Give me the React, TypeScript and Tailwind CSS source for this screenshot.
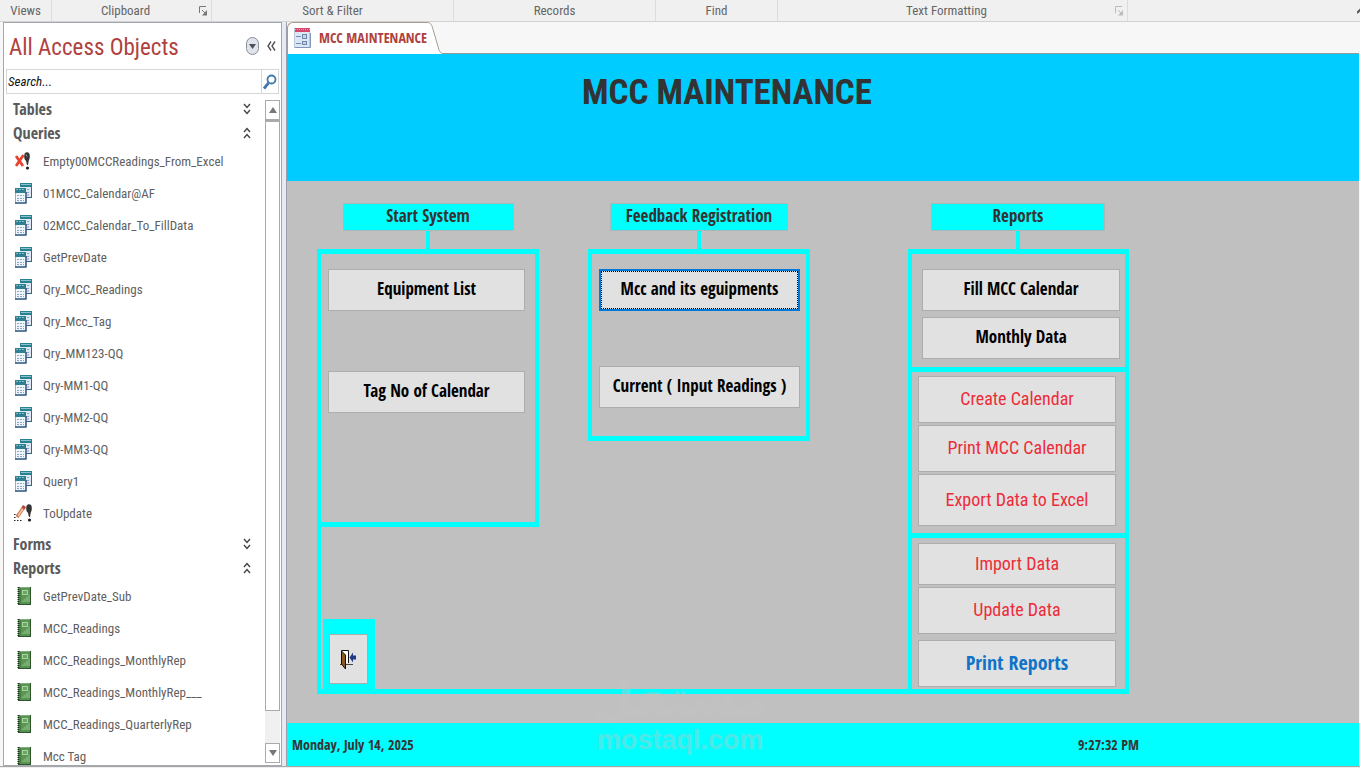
import React from 'react';

const queries = [
  { name: 'Empty00MCCReadings_From_Excel', kind: 'delete' },
  { name: '01MCC_Calendar@AF', kind: 'select' },
  { name: '02MCC_Calendar_To_FillData', kind: 'select' },
  { name: 'GetPrevDate', kind: 'select' },
  { name: 'Qry_MCC_Readings', kind: 'select' },
  { name: 'Qry_Mcc_Tag', kind: 'select' },
  { name: 'Qry_MM123-QQ', kind: 'select' },
  { name: 'Qry-MM1-QQ', kind: 'select' },
  { name: 'Qry-MM2-QQ', kind: 'select' },
  { name: 'Qry-MM3-QQ', kind: 'select' },
  { name: 'Query1', kind: 'select' },
  { name: 'ToUpdate', kind: 'update' },
];

const reports = [
  'GetPrevDate_Sub',
  'MCC_Readings',
  'MCC_Readings_MonthlyRep',
  'MCC_Readings_MonthlyRep___',
  'MCC_Readings_QuarterlyRep',
  'Mcc Tag',
];

const LauncherIcon: React.FC<{ className: string }> = ({ className }) => (
  <svg width="8" height="10" viewBox="0 0 8 10" className={className} fill="none" stroke="currentColor">
    <path d="M.5 7V.5H7" />
    <path d="M3 4l4 4" />
    <path d="M8 4v5.500H3z" fill="currentColor" stroke="none" />
  </svg>
);

const QueryIcon = () => (
  <svg width="17" height="21" viewBox="0 0 17 21">
    <rect x="5" width="12" height="15" fill="#dfe9f3" />
    <rect x="5" width="12" height="4" fill="#2b7f93" />
    <path d="M6 1.500h10" stroke="#8cc3cd" />
    <path d="M5 14.500h12M16.500 4v11" stroke="#3a648f" />
    <path d="M12 6.500h3M12 9.500h3M12 12h3" stroke="#8aa6c4" strokeDasharray="2 1" />
    <rect y="5" width="11" height="15" fill="#eef4fa" />
    <path d="M.5 9v11" stroke="#8fb0cb" />
    <rect y="5" width="11" height="5" fill="#2f8094" />
    <path d="M1 6.500h9" stroke="#7dbac6" strokeDasharray="2 1" />
    <path d="M0 20h11.500M11 9v11" stroke="#2c527f" strokeWidth="1.500" />
    <path d="M2 12.500h7M2 15.500h7M2 17.500h7" stroke="#8ea9c8" strokeDasharray="2 1" />
  </svg>
);

const DeleteQueryIcon = () => (
  <svg width="17" height="19" viewBox="0 0 17 19">
    <path d="M1 4l7 10M8.500 3L1 14" stroke="#e8432f" strokeWidth="2.800" />
    <ellipse cx="12" cy="4.500" rx="2.800" ry="4.200" fill="#333" />
    <path d="M10.500 7h3.500l-1 6h-1z" fill="#333" />
    <path d="M11 2.500l1 2" stroke="#aaa" />
    <circle cx="12.500" cy="16" r="1.600" fill="#222" />
  </svg>
);

const UpdateQueryIcon = () => (
  <svg width="20" height="19" viewBox="0 0 20 19">
    <path d="M3 13L10 3" stroke="#c97050" strokeWidth="3.500" />
    <path d="M4 12L9 4.500" stroke="#f5c9a0" strokeWidth="1.500" />
    <path d="M9 4.500l1.500-2.500" stroke="#b8483a" strokeWidth="3.500" />
    <path d="M0 10.500h1.500M0 13.500h1.500M0 16.500h1.500M3 16.500h1.500M6 16.500h1.500" stroke="#222" />
    <ellipse cx="15" cy="4.500" rx="2.800" ry="4.200" fill="#333" />
    <path d="M13.500 7H17l-1 6h-1z" fill="#333" />
    <circle cx="15.500" cy="16" r="1.600" fill="#222" />
  </svg>
);

const ReportIcon = () => (
  <svg width="14" height="18" viewBox="0 0 14 18">
    <rect x="1" width="13" height="18" fill="#5a9455" />
    <path d="M2 .5h11" stroke="#7fae78" />
    <path d="M4 15l9-8v8z" fill="#76ad6e" />
    <rect x="5.500" y="3.500" width="5" height="4" fill="#6aa562" stroke="#a9d3a1" />
    <path d="M13.500 0v17.500H1" stroke="#2d5229" fill="none" />
    <path d="M1.500 0v18" stroke="#1f2b1f" strokeWidth="2" strokeDasharray="1 1" />
    <path d="M3.500 1v15" stroke="#467f41" />
  </svg>
);

const FormIcon = () => (
  <svg width="17" height="20" viewBox="0 0 17 20">
    <rect x=".5" y=".5" width="15" height="19" fill="#dde6f3" stroke="#b9c6dc" />
    <rect x="1" width="15" height="4" fill="#d4476a" />
    <path d="M1 1.500h15" stroke="#ee9fb0" strokeDasharray="1 1" />
    <path d="M2 8.500h5M2 15.500h5" stroke="#6f8cb6" />
    <rect x="8.500" y="6.500" width="4" height="4" fill="#c7d4e8" stroke="#6f86ae" />
    <rect x="8.500" y="13.500" width="4" height="3" fill="#c7d4e8" stroke="#6f86ae" />
    <path d="M1 19.500h15.500V5" fill="none" stroke="#8095bb" />
  </svg>
);

const ExitIcon = () => (
  <svg width="18" height="21" viewBox="0 0 18 21">
    <path d="M1.500 14V1.500h7V14" fill="#fff" stroke="#111" />
    <path d="M0 15.500h13" stroke="#444" />
    <path d="M1.500 2l4 4v14l-4-5z" fill="#8c5a1e" stroke="#111" />
    <path d="M9.500 8.500l3.500-5v3h3v4h-3v3z" fill="#1f3c86" />
  </svg>
);

const Chevrons: React.FC<{ open: boolean }> = ({ open }) => (
  <svg width="8" height="12" viewBox="0 0 8 12" fill="none" stroke="#444" strokeWidth="1.400">
    {open ? <path d="M1 5l3-3.500L7 5M1 11l3-3.500L7 11" /> : <path d="M1 1l3 3.500L7 1M1 7l3 3.500L7 7" />}
  </svg>
);

const RibbonGroup: React.FC<{ label: string; className: string; children?: React.ReactNode }> = ({ label, className, children }) => (
  <div className={`flex items-center border-r border-[#dcdcdc] ${className}`}>
    <span className="flex-1 text-center">{label}</span>
    {children}
  </div>
);

const GroupHeader: React.FC<{ label: string; open: boolean }> = ({ label, open }) => (
  <button type="button" className="flex h-6 w-full items-center justify-between pl-[9px] pr-[14px] text-left font-['Open_Sans_Condensed','Roboto_Condensed',sans-serif] text-[16px] font-bold text-[#5a5a5a]">
    {label}
    <Chevrons open={open} />
  </button>
);

const NavItem: React.FC<{ label: string; icon: React.ReactNode }> = ({ label, icon }) => (
  <li>
    <a href="#" className="flex h-8 items-center text-[13px] text-[#5f5f5f]">
      <span className="flex w-[39px] justify-center pb-0.5">{icon}</span>
      {label}
    </a>
  </li>
);

const SectionLabel: React.FC<{ label: string; className: string }> = ({ label, className }) => (
  <div className="flex w-[222px] flex-col items-center">
    <h2 className={`h-7 border border-[#a8b8b8] bg-[#00ffff] text-center text-[17px] leading-6 text-[#333] ${className}`}>{label}</h2>
    <div className="h-[18px] w-1 bg-[#00ffff]" />
  </div>
);

const plain = 'h-[42px] border border-[#adadad] text-[17px] text-black';
const red = "border border-[#adadad] font-['Roboto_Condensed',sans-serif] text-[18px] font-normal text-[#ed2c3a]";

const FormButton: React.FC<{ label: string; className?: string }> = ({ label, className = plain }) => (
  <button type="button" className={`w-full bg-[#e1e1e1] pb-0.5 ${className}`}>
    {label}
  </button>
);

const App: React.FC = () => {
  return (
    <div className="flex h-screen flex-col overflow-hidden bg-[#f7f7f7] font-['Roboto_Condensed','Liberation_Sans',sans-serif]">
      {/* Ribbon group captions */}
      <div className="flex h-[22px] shrink-0 border-b border-[#d2d2d2] bg-[#f0f0f0] text-[13px] text-[#666]">
        <RibbonGroup label="Views" className="w-[52px]" />
        <RibbonGroup label="Clipboard" className="w-40 pr-1">
          <LauncherIcon className="text-[#777]" />
        </RibbonGroup>
        <RibbonGroup label="Sort & Filter" className="w-[242px]" />
        <RibbonGroup label="Records" className="w-[202px]" />
        <RibbonGroup label="Find" className="w-[122px]" />
        <RibbonGroup label="Text Formatting" className="w-[350px] pr-1">
          <LauncherIcon className="text-[#bbb]" />
        </RibbonGroup>
        <div className="flex flex-1 items-center justify-end">
          <svg width="3" height="8" viewBox="0 0 3 8" fill="none" stroke="#555" strokeWidth="2">
            <path d="M0 6l4-4" />
          </svg>
        </div>
      </div>

      <div className="flex min-h-0 flex-1">
        {/* Navigation pane */}
        <aside className="ml-[3px] flex w-[279px] shrink-0 flex-col border border-[#a3a8ae] bg-white">
          <div className="flex h-[46px] shrink-0 items-center px-[5px]">
            <h2 className="flex-1 pt-1 text-[23px] text-[#b0413e]">All Access Objects</h2>
            <button type="button" aria-label="Object type" className="mr-2 flex h-[18px] w-[13px] items-center justify-center rounded-full border border-[#8a8f98] bg-[#dfe3ea]">
              <svg width="7" height="5" viewBox="0 0 7 5"><path d="M0 0h7L3.500 5z" fill="#4a4f5a" /></svg>
            </button>
            <button type="button" aria-label="Collapse pane">
              <svg width="9" height="10" viewBox="0 0 9 10" fill="none" stroke="#555" strokeWidth="1.400">
                <path d="M4 .5L1 5l3 4.500M8 .5L5 5l3 4.500" />
              </svg>
            </button>
          </div>
          <div className="mx-0.5 flex h-[25px] shrink-0 border border-[#d6d6d6]">
            <input aria-label="Search" placeholder="Search..." className="min-w-0 flex-1 px-px text-[13px] italic outline-none placeholder:text-[#111]" />
            <button type="button" aria-label="Search objects" className="flex w-[17px] items-center justify-center border-l border-[#d6d6d6]">
              <svg width="14" height="16" viewBox="0 0 14 16" fill="none" stroke="#3f78ab">
                <circle cx="8.500" cy="5.500" r="4" strokeWidth="1.800" />
                <path d="M5.500 9L1 14.500" strokeWidth="2.800" />
              </svg>
            </button>
          </div>
          <div className="flex min-h-0 flex-1">
            <nav className="flex-1 overflow-hidden pt-[3px]">
              <GroupHeader label="Tables" open={false} />
              <GroupHeader label="Queries" open />
              <ul className="pb-0.5 pt-px">
                {queries.map((q) => (
                  <NavItem
                    key={q.name}
                    label={q.name}
                    icon={q.kind === 'delete' ? <DeleteQueryIcon /> : q.kind === 'update' ? <UpdateQueryIcon /> : <QueryIcon />}
                  />
                ))}
              </ul>
              <GroupHeader label="Forms" open={false} />
              <GroupHeader label="Reports" open />
              <ul className="pb-0.5 pt-px">
                {reports.map((name) => (
                  <NavItem key={name} label={name} icon={<ReportIcon />} />
                ))}
              </ul>
            </nav>
            {/* Scroll bar */}
            <div className="mb-0.5 mr-px mt-[6px] flex w-[15px] flex-col bg-[#f0f0f0]">
              <button type="button" aria-label="Scroll up" className="flex h-5 items-center justify-center border border-[#aaa] bg-white">
                <svg width="8" height="6" viewBox="0 0 8 6"><path d="M0 6h8L4 0z" fill="#777" /></svg>
              </button>
              <div className="flex-1 border border-t-2 border-[#aaa] bg-white" />
              <div className="h-8" />
              <button type="button" aria-label="Scroll down" className="flex h-5 items-center justify-center border border-[#aaa] bg-white">
                <svg width="8" height="6" viewBox="0 0 8 6"><path d="M0 0h8L4 6z" fill="#777" /></svg>
              </button>
            </div>
          </div>
        </aside>
        <div className="w-[5px] shrink-0 border-r border-[#9aa0a8] bg-[#e6eaf2]" />

        {/* Form window */}
        <main className="relative mr-px flex min-w-0 flex-1 flex-col">
          <div className="flex h-8 shrink-0">
            <button type="button" className="flex items-center rounded-tl-md border-l border-t border-[#a79c90] bg-white pb-0.5 pl-[6px] font-['Open_Sans_Condensed','Roboto_Condensed',sans-serif] text-[14px] font-bold text-[#b0413e]">
              <FormIcon />
              <span className="ml-2">MCC MAINTENANCE</span>
            </button>
            <svg width="16" height="32" viewBox="0 0 16 32">
              <path d="M0 .5c4 0 5 3 6 7l5 17c1 4 2 7 5 7V32H0z" fill="#fff" />
              <path d="M0 .5c4 0 5 3 6 7l5 17c1 4 2 7 5 7" fill="none" stroke="#a79c90" />
            </svg>
            <div className="flex-1 border-b border-[#999]" />
          </div>

          <header className="h-[127px] shrink-0 bg-[#00ccff]">
            <h1 className="w-[880px] pt-[18px] text-center text-[35px] font-bold leading-[42px] text-[#333]">MCC MAINTENANCE</h1>
          </header>

          <div className="flex-1 bg-[#c0c0c0] pl-[30px] pt-[22px] font-['Open_Sans_Condensed','Roboto_Condensed',sans-serif] font-bold">
            <div className="flex w-[812px] justify-between">
              <div className="flex gap-[49px]">
                <SectionLabel label="Start System" className="w-[171px]" />
                <SectionLabel label="Feedback Registration" className="w-[178px]" />
              </div>
              <SectionLabel label="Reports" className="w-[174px]" />
            </div>

            <div className="flex h-[445px] w-[812px] border-b-[5px] border-l-4 border-[#00ffff]">
              <div className="flex w-[218px] flex-col justify-between">
                <div className="flex h-[278px] flex-col gap-[60px] border-y-[5px] border-r-4 border-[#00ffff] pl-[7px] pr-[10px] pt-[15px]">
                  <FormButton label="Equipment List" />
                  <FormButton label="Tag No of Calendar" />
                </div>
                <div className="ml-0.5 h-[70px] w-[52px] bg-[#00ffff] pl-[6px] pt-[15px]">
                  <button type="button" aria-label="Exit" className="flex h-[50px] w-[39px] items-center justify-center border border-[#adadad] bg-[#e1e1e1]">
                    <ExitIcon />
                  </button>
                </div>
              </div>

              <div className="ml-[49px] flex h-48 w-[222px] flex-col gap-[55px] border-x-4 border-y-[5px] border-[#00ffff] pl-[7px] pr-[6px] pt-[15px]">
                <FormButton
                  label="Mcc and its eguipments"
                  className="h-[42px] border-2 border-[#0078d7] text-[17px] text-black outline-1 -outline-offset-3 outline-dotted outline-black"
                />
                <FormButton label="Current ( Input Readings )" />
              </div>

              <div className="ml-auto flex w-[221px] flex-col border-x-4 border-t-[5px] border-[#00ffff]">
                <div className="flex h-[118px] flex-col gap-[6px] border-b-[5px] border-[#00ffff] pl-[10px] pr-[5px] pt-[15px]">
                  <FormButton label="Fill MCC Calendar" />
                  <FormButton label="Monthly Data" />
                </div>
                <div className="flex h-[166px] flex-col gap-0.5 border-b-[5px] border-[#00ffff] pl-[6px] pr-[9px] pt-1">
                  <FormButton label="Create Calendar" className={`h-[47px] ${red}`} />
                  <FormButton label="Print MCC Calendar" className={`h-[47px] ${red}`} />
                  <FormButton label="Export Data to Excel" className={`h-[52px] ${red}`} />
                </div>
                <div className="flex flex-col gap-0.5 pl-[6px] pr-[9px] pt-[5px]">
                  <FormButton label="Import Data" className={`h-[42px] ${red}`} />
                  <FormButton label="Update Data" className={`h-[47px] ${red}`} />
                  <FormButton label="Print Reports" className="mt-1 h-[47px] border border-[#adadad] text-[20px] text-[#0f74c8]" />
                </div>
              </div>
            </div>
          </div>

          <footer className="h-[43px] shrink-0 bg-[#00ffff] font-['Open_Sans_Condensed','Roboto_Condensed',sans-serif] text-[14px] font-bold text-[#333]">
            <div className="flex h-full w-[852px] items-center justify-between pl-[5px]">
              <span>Monday, July 14, 2025</span>
              <time>9:27:32 PM</time>
            </div>
          </footer>

          {/* Watermark */}
          <div className="pointer-events-none absolute bottom-2 left-[310px] flex w-[166px] flex-col items-center font-bold text-[#c4c4c4] opacity-40">
            <span lang="ar" dir="rtl" className="font-['DejaVu_Sans',sans-serif] text-[48px] leading-[48px]">مستقل</span>
            <span className="font-['Liberation_Sans',sans-serif] text-[27px] leading-9">mostaql.com</span>
          </div>
        </main>
      </div>
      <div className="h-0.5 shrink-0 border-t border-[#a8a8a8] bg-[#eee]" />
    </div>
  );
};

export default App;
